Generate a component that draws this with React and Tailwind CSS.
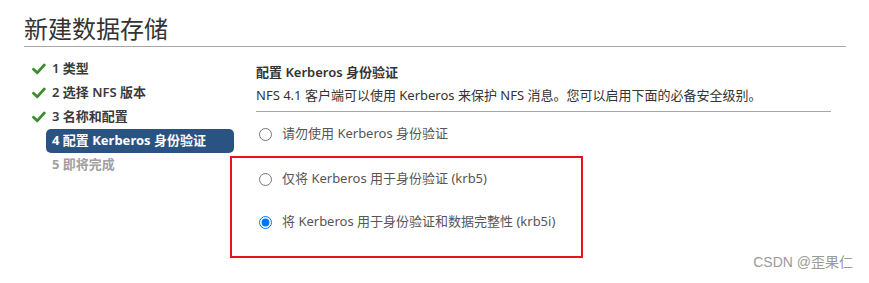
import React, { useState } from 'react';

const FONT = { fontFamily: '"Noto Sans", "Noto Sans CJK SC", sans-serif' };

const Check = () => (
    <svg width="14" height="12" viewBox="0 0 14 12" className="shrink-0">
        <path d="M1.5 6.3 L5.2 9.8 L12.3 2" fill="none" stroke="#3d8b2f" strokeWidth="2.7" strokeLinecap="round" strokeLinejoin="round" />
    </svg>
);

const steps = [
    { id: 1, label: '1 类型', state: 'done' },
    { id: 2, label: '2 选择 NFS 版本', state: 'done' },
    { id: 3, label: '3 名称和配置', state: 'done' },
    { id: 4, label: '4 配置 Kerberos 身份验证', state: 'active' },
    { id: 5, label: '5 即将完成', state: 'todo' },
];

const Radio = ({ value, label, selected, onSelect }) => (
    <label className="flex items-center h-5 cursor-pointer">
        <input
            type="radio"
            name="krb"
            checked={selected === value}
            onChange={() => onSelect(value)}
            className="w-[13px] h-[13px] m-0 ml-[3px] mr-[10px] shrink-0"
        />
        <span className="text-[13px] text-[#565656]">{label}</span>
    </label>
);

export default function App() {
    const [mode, setMode] = useState('krb5i');

    return (
        <div className="relative w-[869px] h-[283px] bg-white overflow-hidden" style={FONT}>
            {/* Title */}
            <div className="pl-6 pr-[23px] pt-[13px]">
                <h1 className="text-[24px] leading-[32px] text-[#333] font-normal border-b border-[#a6a6a6] pb-[1px]">新建数据存储</h1>
            </div>

            <div className="flex pt-[10px]">
                {/* Steps */}
                <nav className="w-[202px] ml-8 flex flex-col">
                    {steps.map((s) => {
                        if (s.state === 'active') {
                            return (
                                <div key={s.id} className="h-6 ml-[14px] pl-[6px] flex items-center rounded-[5px] bg-[#2b5381] text-white text-[13px] font-bold">
                                    {s.label}
                                </div>
                            );
                        }
                        if (s.state === 'todo') {
                            return (
                                <div key={s.id} className="h-6 pl-5 flex items-center text-[13px] font-bold text-[#a0a0a0]">
                                    {s.label}
                                </div>
                            );
                        }
                        return (
                            <div key={s.id} className="h-6 flex items-center gap-[6px] text-[13px] font-semibold text-[#3a3a3a]">
                                <Check />
                                <span>{s.label}</span>
                            </div>
                        );
                    })}
                </nav>

                {/* Kerberos form */}
                <div className="ml-[22px] w-[575px] pt-[5px]">
                    <div className="text-[13px] leading-5 font-semibold text-[#333]">配置 Kerberos 身份验证</div>
                    <div className="text-[13px] leading-5 text-[#333] mt-[3px] pb-[6px] border-b border-[#a6a6a6]">
                        NFS 4.1 客户端可以使用 Kerberos 来保护 NFS 消息。您可以启用下面的必备安全级别。
                    </div>
                    <div className="mt-[12px]">
                        <Radio value="none" label="请勿使用 Kerberos 身份验证" selected={mode} onSelect={setMode} />
                    </div>
                    <div className="-ml-[26px] w-[353px] mt-[12px] border-2 border-[#e8131f] pl-[24px] pt-[11px] pb-[24px] flex flex-col gap-[23px]">
                        <Radio value="krb5" label="仅将 Kerberos 用于身份验证 (krb5)" selected={mode} onSelect={setMode} />
                        <Radio value="krb5i" label="将 Kerberos 用于身份验证和数据完整性 (krb5i)" selected={mode} onSelect={setMode} />
                    </div>
                </div>
            </div>

            {/* watermark */}
            <div className="absolute right-[16px] bottom-[10px] text-[14px] text-[#9a9a9a]" style={{ fontFamily: '"Liberation Sans", "Noto Sans CJK SC", sans-serif' }}>
                CSDN @歪果仁
            </div>
        </div>
    );
}
